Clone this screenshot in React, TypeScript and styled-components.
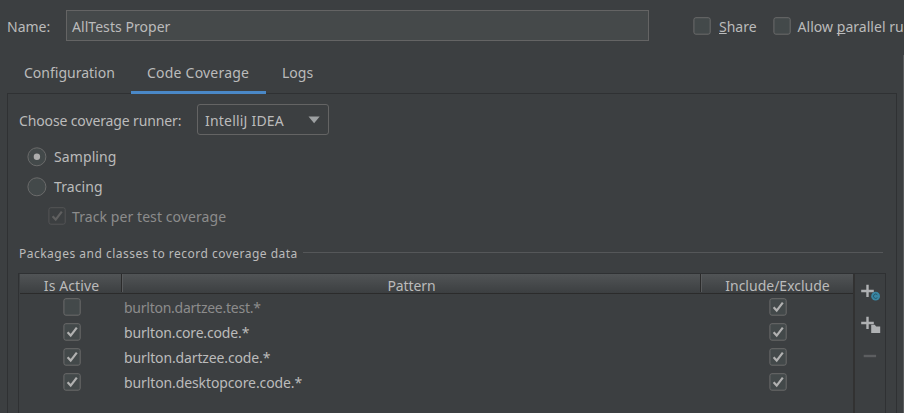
import React from "react";
import styled, { createGlobalStyle } from "styled-components";

const GlobalStyle = createGlobalStyle`
  * { box-sizing: border-box; }
  html, body { margin: 0; height: 100%; overflow: hidden; background: #3c3f41; }
`;

const Window = styled.div`
  display: flex;
  width: 904px;
  height: 413px;
  flex-direction: column;
  overflow: hidden;
  background: #3c3f41;
  color: #bbbbbb;
  font: 14px/20px "Noto Sans", "Open Sans", sans-serif;
  white-space: nowrap;
`;

const Label = styled.span<{ $ls?: number; $dim?: boolean }>`
  letter-spacing: ${(p) => p.$ls ?? 0}px;
  color: ${(p) => (p.$dim ? "#8c8c8c" : "inherit")};
`;

const Mnemonic = styled.span`
  text-decoration: underline;
  text-decoration-skip-ink: none;
  text-underline-offset: 1px;
  text-decoration-thickness: 1px;
`;

const NameRow = styled.div`
  display: flex;
  flex: none;
  height: 54px;
  padding: 10px 0 0 7px;
`;

const NameLabel = styled.div`
  flex: none;
  width: 59px;
  padding-top: 7px;
`;

const NameField = styled.div`
  flex: none;
  width: 583px;
  height: 31px;
  padding: 6px 0 0 5px;
  border: 1px solid #646464;
  background: #45494a;
`;

const Option = styled.div<{ $left: number; $gap: number }>`
  display: flex;
  flex: none;
  gap: ${(p) => p.$gap}px;
  padding-top: 7px;
  margin-left: ${(p) => p.$left}px;
`;

const Body = styled.div`
  display: flex;
  flex: 1;
  min-height: 0;
`;

const Main = styled.div`
  display: flex;
  flex-direction: column;
  width: 903px;
  padding-left: 7px;
`;

const Scrollbar = styled.div`
  width: 1px;
  margin-top: 1px;
  background: #595b5d;
`;

const Tabs = styled.div`
  display: flex;
  flex: none;
  height: 40px;
  margin-bottom: -1px;
  z-index: 1;
`;

const Tab = styled.div<{ $width: number; $active?: boolean }>`
  width: ${(p) => p.$width}px;
  padding: 9px 0 0 16px;
  border-bottom: 3px solid ${(p) => (p.$active ? "#4a88c7" : "transparent")};

  &:first-child {
    padding-left: 17px;
  }
`;

const Panel = styled.div`
  display: flex;
  flex: 1;
  flex-direction: column;
  width: 890px;
  padding: 10px 10px 0 11px;
  border: 1px solid #2f3133;
  border-bottom: 0;
`;

const RunnerRow = styled.div`
  display: flex;
  flex: none;
  height: 43px;
`;

const RunnerLabel = styled.div`
  width: 178px;
  padding-top: 7px;
`;

const Combo = styled.div`
  display: flex;
  justify-content: space-between;
  width: 132px;
  height: 31px;
  padding: 6px 8px 0 7px;
  border: 1px solid #646464;
  border-radius: 3px;
`;

const RadioRow = styled.div`
  display: flex;
  flex: none;
  height: 30px;
  gap: 7px;
  padding-left: 8px;
`;

const TrackRow = styled.div`
  display: flex;
  flex: none;
  height: 37px;
  gap: 6px;
  padding-left: 29px;
`;

const SectionTitle = styled.div`
  display: flex;
  flex: none;
  align-items: center;
  height: 29px;
  gap: 5px;
  padding-bottom: 10px;
  font-size: 12px;
`;

const Rule = styled.div`
  flex: 1;
  height: 1px;
  margin: 0 3px 2px 0;
  background: #555759;
`;

const TableFrame = styled.div`
  display: flex;
  flex: 1;
  width: 868px;
  margin-left: -1px;
  border: 1px solid #2f3133;
  border-bottom: 0;
`;

const Table = styled.div`
  width: 836px;
  padding-left: 1px;
  border-right: 2px solid #323232;
`;

const columns = "101px 579px 1fr";

const Header = styled.div`
  display: grid;
  grid-template-columns: ${columns};
  height: 20px;
  border-bottom: 1px solid #2b2b2b;
  background: linear-gradient(#515456, #3c3f41);
`;

const HeaderCell = styled.div<{ $divided?: boolean }>`
  display: flex;
  justify-content: center;
  height: 18px;
  padding: 2px 0 0 ${(p) => (p.$divided ? 1 : 2)}px;
  line-height: 19px;
  border-left: ${(p) => (p.$divided ? "1px solid #2b2b2b" : "0")};
  box-shadow: ${(p) => (p.$divided ? "inset 1px 0 #595b5d" : "none")};
`;

const Rows = styled.div`
  padding-top: 1px;
`;

const Row = styled.div`
  display: grid;
  grid-template-columns: ${columns};
  height: 25px;
`;

const CheckCell = styled.div<{ $left: number }>`
  padding: 3px 0 0 ${(p) => p.$left}px;
  line-height: 0;
`;

const PatternCell = styled.div`
  padding: 3px 0 0 3px;
`;

const Toolbar = styled.div`
  display: flex;
  flex-direction: column;
  width: 30px;
  padding: 9px 0 0 6px;
`;

const Glyph = styled.svg`
  display: block;
  flex: none;
`;

function Checkbox({ checked = false, disabled = false }: { checked?: boolean; disabled?: boolean }) {
  return (
    <Glyph width="18" height="18">
      <rect x="0.9" y="0.7" width="16.3" height="16.5" rx="2" fill={disabled ? "#3c3f41" : "#43494a"} stroke={disabled ? "#545556" : "#6b6b6b"} />
      {checked && <path d="M4.6 9.3 7.7 12.6 13.8 4.6" fill="none" stroke={disabled ? "#606060" : "#b1b1b1"} strokeWidth="2.2" />}
    </Glyph>
  );
}

function Radio({ selected = false }: { selected?: boolean }) {
  return (
    <Glyph width="20" height="20">
      <circle cx="9.9" cy="9.8" r="9" fill="#43494a" stroke="#6b6b6b" />
      {selected && <circle cx="9.9" cy="9.8" r="3.2" fill="#adadad" />}
    </Glyph>
  );
}

function ActionIcon({ kind }: { kind: "class" | "package" | "remove" }) {
  if (kind === "remove") {
    return (
      <Glyph width="20" height="32">
        <path d="M2.7 9h12.4" stroke="#5c5e60" strokeWidth="2.4" />
      </Glyph>
    );
  }
  return (
    <Glyph width="20" height="32">
      <path d="M.2 8h12.6M6.5 1.7v12.4" stroke="#afb1b3" strokeWidth="2.4" />
      {kind === "class" ? (
        <>
          <circle cx="14.6" cy="13.2" r="4.4" fill="#3986a3" />
          <path d="M16.4 11.8a2.2 2.2 0 1 0 0 2.8" fill="none" stroke="#27586c" strokeWidth="1" />
        </>
      ) : (
        <path d="M10.2 9.8h3.5l1.5 1.6h4v6.6h-9z" fill="#afb1b3" />
      )}
    </Glyph>
  );
}

const patterns = [
  { text: "burlton.dartzee.test.*", active: false, ls: -0.25 },
  { text: "burlton.core.code.*", active: true, ls: -0.15 },
  { text: "burlton.dartzee.code.*", active: true, ls: -0.13 },
  { text: "burlton.desktopcore.code.*", active: true, ls: -0.11 },
];

export default function App() {
  return (
    <Window>
      <GlobalStyle />
      <NameRow>
        <NameLabel><Label>Name:</Label></NameLabel>
        <NameField><Label $ls={0.05}>AllTests Proper</Label></NameField>
        <Option $left={44} $gap={8}>
          <Checkbox />
          <Label><Mnemonic>S</Mnemonic>hare</Label>
        </Option>
        <Option $left={16} $gap={7}>
          <Checkbox />
          <Label $ls={0.03}>Allow <Mnemonic>p</Mnemonic>arallel ru</Label>
        </Option>
      </NameRow>
      <Body>
        <Main>
          <Tabs>
            <Tab $width={124}><Label>Configuration</Label></Tab>
            <Tab $width={135} $active><Label $ls={0.22}>Code Coverage</Label></Tab>
            <Tab $width={64}><Label>Logs</Label></Tab>
          </Tabs>
          <Panel>
            <RunnerRow>
              <RunnerLabel><Label $ls={-0.13}>Choose coverage runner:</Label></RunnerLabel>
              <Combo>
                <Label $ls={0.2}>IntelliJ IDEA</Label>
                <Glyph width="12" height="16"><path d="M.5 5.6h11.2L6.1 12.2z" fill="#9da0a2" /></Glyph>
              </Combo>
            </RunnerRow>
            <RadioRow><Radio selected /><Label $ls={0.1}>Sampling</Label></RadioRow>
            <RadioRow><Radio /><Label $ls={0.1}>Tracing</Label></RadioRow>
            <TrackRow><Checkbox checked disabled /><Label $dim $ls={0.08}>Track per test coverage</Label></TrackRow>
            <SectionTitle><Label $ls={0.49}>Packages and classes to record coverage data</Label><Rule /></SectionTitle>
            <TableFrame>
              <Table>
                <Header>
                  <HeaderCell><Label $ls={0.1}>Is Active</Label></HeaderCell>
                  <HeaderCell $divided><Label $ls={-0.1}>Pattern</Label></HeaderCell>
                  <HeaderCell $divided><Label>Include/Exclude</Label></HeaderCell>
                </Header>
                <Rows>
                  {patterns.map((p) => (
                    <Row key={p.text}>
                      <CheckCell $left={43}><Checkbox checked={p.active} /></CheckCell>
                      <PatternCell><Label $ls={p.ls} $dim={!p.active}>{p.text}</Label></PatternCell>
                      <CheckCell $left={69}><Checkbox checked /></CheckCell>
                    </Row>
                  ))}
                </Rows>
              </Table>
              <Toolbar>
                <ActionIcon kind="class" />
                <ActionIcon kind="package" />
                <ActionIcon kind="remove" />
              </Toolbar>
            </TableFrame>
          </Panel>
        </Main>
        <Scrollbar />
      </Body>
    </Window>
  );
}
